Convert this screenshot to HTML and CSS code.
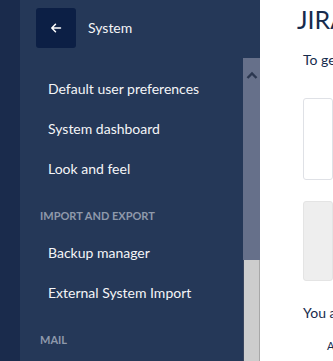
FILE: index.html
```html
<!DOCTYPE html>
<html>
<head>
<meta charset="utf-8">
<link rel="stylesheet" href="styles.css">
</head>
<body>
<div class="strip"></div>
<nav class="sidebar">
  <div class="side-head">
    <button class="back" aria-label="Back">
      <svg width="12" height="12" viewBox="0 0 12 12"><path d="M10.5 6H2M5.5 2.2L1.8 6l3.7 3.8" fill="none" stroke="#fff" stroke-width="1.5" stroke-linecap="round" stroke-linejoin="round"/></svg>
    </button>
    <span class="side-title">System</span>
  </div>
  <div class="side-body">
    <div class="menu">
      <a class="item">Default user preferences</a>
      <a class="item">System dashboard</a>
      <a class="item">Look and feel</a>
      <div class="group">IMPORT AND EXPORT</div>
      <a class="item">Backup manager</a>
      <a class="item">External System Import</a>
      <div class="group">MAIL</div>
    </div>
    <div class="scrollbar">
      <div class="thumb">
        <svg class="chev" width="12" height="8" viewBox="0 0 12 8"><path d="M1.5 7L6 2.5 10.5 7" fill="none" stroke="#2b3750" stroke-width="2.4"/></svg>
      </div>
      <div class="track"></div>
    </div>
  </div>
</nav>
<main class="main">
  <h1 class="title">JIRA</h1>
  <p class="intro">To get started</p>
  <div class="card"></div>
  <div class="card grey"></div>
  <p class="intro you">You are</p>
  <p class="small">A</p>
</main>
</body>
</html>
```
FILE: styles.css
```css
html, body {
  margin: 0;
  height: 361px;
  overflow: hidden;
}
body {
  display: flex;
  font-family: Lato, "Noto Sans", sans-serif;
  background: #fff;
}
.strip {
  width: 20px;
  flex: none;
  background: #1a2b4c;
}
.sidebar {
  width: 240px;
  flex: none;
  background: #253858;
  display: flex;
  flex-direction: column;
}
.side-head {
  height: 58px;
  flex: none;
  display: flex;
  align-items: flex-start;
  padding: 8px 0 0 16px;
  box-sizing: border-box;
}
.back {
  width: 40px;
  height: 40px;
  border: 0;
  border-radius: 3px;
  background: #0c1f45;
  padding: 0;
  display: flex;
  align-items: center;
  justify-content: center;
}
.side-title {
  margin-left: 12px;
  line-height: 40px;
  font-size: 14px;
  color: #f4f5f7;
}
.side-body {
  flex: 1;
  display: flex;
  min-height: 0;
}
.menu {
  width: 223px;
  padding-top: 11px;
}
.item {
  display: block;
  height: 40px;
  line-height: 40px;
  padding-left: 28px;
  font-size: 14px;
  color: #f4f5f7;
  white-space: nowrap;
}
.group {
  padding: 19px 0 9px 20px;
  line-height: 16px;
  font-size: 11px;
  font-weight: 700;
  color: #8f99ab;
}
.scrollbar {
  width: 17px;
  display: flex;
  flex-direction: column;
}
.thumb {
  height: 202px;
  background: #66708a;
  display: flex;
  justify-content: center;
  padding-top: 13px;
  box-sizing: border-box;
}
.track {
  flex: 1;
  background: #cdcdcd;
  border-left: 1px solid #3a4660;
  border-right: 1px solid #a8a8a8;
}
.main {
  flex: 1;
  color: #172b4d;
  padding-left: 43px;
  overflow: hidden;
  white-space: nowrap;
}
.title {
  margin: 4px 0 0 -6px;
  font-size: 25px;
  font-weight: 400;
  line-height: 30px;
}
.intro {
  margin: 16px 0 0;
  font-size: 14px;
  line-height: 20px;
}
.card {
  margin-top: 28px;
  height: 82px;
  border: 1px solid #dfe1e6;
  border-radius: 3px;
  box-sizing: border-box;
}
.card.grey {
  margin-top: 21px;
  height: 80px;
  background: #eeeeee;
  border-color: #e4e4e4;
}
.you {
  margin-top: 22px;
}
.small {
  margin: 16px 0 0 24px;
  font-size: 11px;
  line-height: 14px;
}
```
